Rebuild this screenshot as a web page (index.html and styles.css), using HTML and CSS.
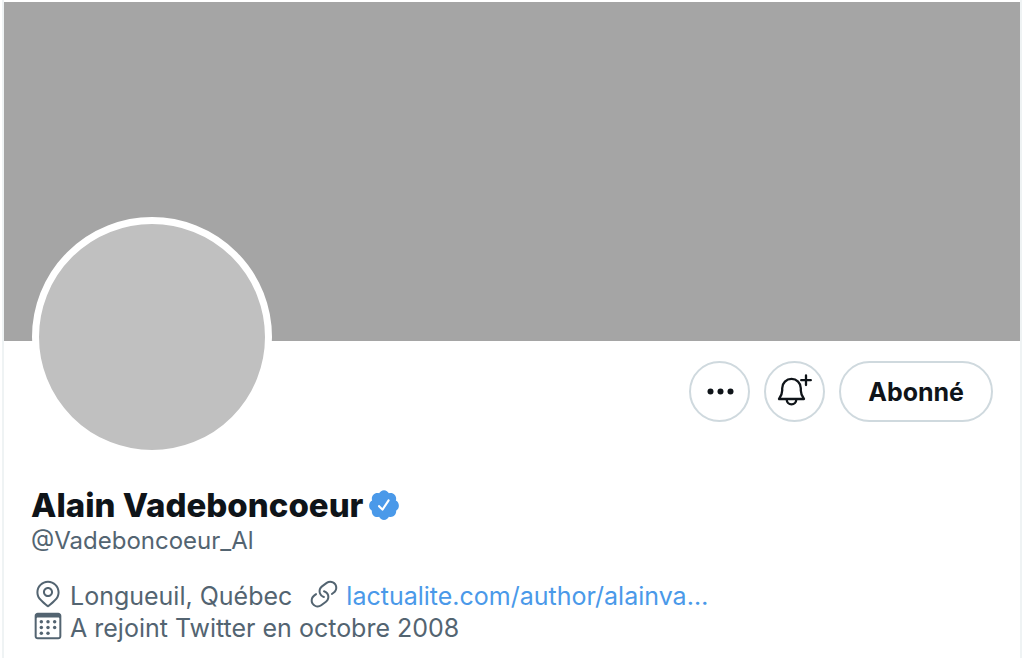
FILE: index.html
```html
<!DOCTYPE html>
<html lang="fr">
<head>
    <meta charset="UTF-8">
    <meta name="viewport" content="width=device-width, initial-scale=1.0">
    <title>Alain Vadeboncoeur</title>
    <link rel="stylesheet" href="styles.css">
</head>
<body>

<main class="profile">
    <div class="cover"></div>

    <div class="top-row">
        <div class="avatar"></div>
        <div class="actions">
            <button class="btn btn-round" type="button" aria-label="Plus">
                <svg class="btn-icon" viewBox="0 0 36 36" fill="currentColor">
                    <circle cx="8.5" cy="17.5" r="3"/>
                    <circle cx="18.5" cy="17.5" r="3"/>
                    <circle cx="28.5" cy="17.5" r="3"/>
                </svg>
            </button>
            <button class="btn btn-round" type="button" aria-label="Notifications">
                <svg class="btn-icon" viewBox="0 0 36 36" fill="none" stroke="currentColor" stroke-width="2.3" stroke-linecap="round" stroke-linejoin="round">
                    <path d="M2 25h25c-2.4-3.2-3.2-5.500-3.200-8.500v-2.300a9.300 9.300 0 0 0-18.600 0v2.300c0 3-.8 5.300-3.200 8.500z"/>
                    <path d="M9.700 25.500a4.800 4.800 0 0 0 9.600 0"/>
                    <path d="M29 1.500v9.500M24.200 6.200h9.600"/>
                </svg>
            </button>
            <button class="btn btn-follow" type="button">Abonné</button>
        </div>
    </div>

    <div class="names">
        <h1 class="name">
            Alain Vadeboncoeur
            <svg class="badge" viewBox="0 0 24 24" fill="currentColor" role="img" aria-label="Compte certifié">
                <path d="M22.5 12.5c0-1.58-.875-2.95-2.148-3.6.154-.435.238-.905.238-1.4 0-2.21-1.71-3.998-3.818-3.998-.47 0-.92.084-1.336.25C14.818 2.415 13.51 1.5 12 1.5s-2.816.917-3.437 2.25c-.415-.165-.866-.25-1.336-.25-2.11 0-3.818 1.79-3.818 4 0 .494.083.964.237 1.4-1.272.65-2.147 2.018-2.147 3.6 0 1.495.782 2.798 1.942 3.486-.02.17-.032.34-.032.514 0 2.21 1.708 4 3.818 4 .47 0 .92-.086 1.335-.25.62 1.334 1.926 2.25 3.437 2.25 1.512 0 2.818-.916 3.437-2.25.415.163.865.248 1.336.248 2.11 0 3.818-1.79 3.818-4 0-.174-.012-.344-.033-.513 1.158-.687 1.943-1.99 1.943-3.484zm-6.616-3.334l-4.334 6.5c-.145.217-.382.334-.625.334-.143 0-.288-.04-.416-.126l-.115-.094-2.415-2.415c-.293-.293-.293-.768 0-1.06s.768-.294 1.06 0l1.77 1.767 3.825-5.74c.23-.345.696-.436 1.04-.207.346.23.44.696.21 1.04z"/>
            </svg>
        </h1>
        <div class="handle">@Vadeboncoeur_Al</div>
    </div>

    <div class="details">
        <span class="detail">
            <svg class="detail-icon" viewBox="0 0 24 24" fill="currentColor">
                <path d="M12 14.315c-2.088 0-3.787-1.698-3.787-3.786S9.913 6.74 12 6.74s3.787 1.7 3.787 3.787-1.7 3.785-3.787 3.785zm0-6.073c-1.26 0-2.287 1.026-2.287 2.287S10.74 12.814 12 12.814s2.287-1.025 2.287-2.286S13.26 8.24 12 8.24z"/>
                <path d="M20.692 10.69C20.692 5.9 16.792 2 12 2s-8.692 3.9-8.692 8.69c0 1.902.603 3.708 1.743 5.223l.003-.002.007.015c1.628 2.07 6.278 5.757 6.475 5.912.138.11.302.163.465.163.163 0 .327-.053.465-.162.197-.155 4.847-3.84 6.475-5.912l.007-.014.002.002c1.14-1.516 1.742-3.32 1.742-5.223zM12 20.29c-1.224-.99-4.52-3.715-5.756-5.285-.94-1.25-1.436-2.742-1.436-4.312C4.808 6.727 8.035 3.5 12 3.5s7.192 3.226 7.192 7.19c0 1.57-.497 3.062-1.436 4.313-1.236 1.57-4.532 4.294-5.756 5.285z"/>
            </svg>
            Longueuil, Québec
        </span>
        <span class="detail">
            <svg class="detail-icon" viewBox="0 0 24 24" fill="currentColor">
                <path d="M11.96 14.945c-.067 0-.136-.01-.203-.027-1.13-.318-2.097-.986-2.795-1.932-.832-1.125-1.176-2.508-.968-3.893s.942-2.605 2.068-3.438l3.53-2.608c2.322-1.716 5.61-1.224 7.33 1.1.83 1.127 1.175 2.51.967 3.895s-.943 2.605-2.07 3.438l-1.48 1.094c-.333.246-.804.175-1.05-.158-.246-.334-.176-.804.158-1.05l1.48-1.095c.803-.592 1.327-1.463 1.476-2.45.148-.988-.098-1.975-.69-2.778-1.225-1.656-3.572-2.01-5.23-.784l-3.53 2.608c-.802.593-1.326 1.464-1.475 2.45-.15.99.097 1.975.69 2.778.498.675 1.187 1.15 1.992 1.377.4.114.633.528.52.928-.092.33-.394.547-.722.547z"/>
                <path d="M7.27 22.054c-1.61 0-3.197-.735-4.225-2.125-.832-1.127-1.176-2.51-.968-3.894s.943-2.605 2.07-3.438l1.478-1.094c.334-.245.805-.175 1.05.158s.177.804-.157 1.05l-1.48 1.095c-.803.593-1.326 1.464-1.475 2.45-.148.99.097 1.975.69 2.778 1.225 1.657 3.57 2.01 5.23.785l3.528-2.608c1.658-1.225 2.01-3.57.785-5.23-.498-.674-1.187-1.15-1.992-1.376-.4-.113-.633-.527-.52-.927.112-.4.528-.63.926-.522 1.13.318 2.096.986 2.794 1.932 1.717 2.324 1.224 5.612-1.1 7.33l-3.53 2.608c-.933.693-2.023 1.026-3.105 1.026z"/>
            </svg>
            <a href="#">lactualite.com/author/alainva…</a>
        </span>
        <span class="detail detail-joined">
            <svg class="detail-icon" viewBox="0 0 24 24" fill="currentColor">
                <path d="M19.708 2H4.292C3.028 2 2 3.028 2 4.292v15.416C2 20.972 3.028 22 4.292 22h15.416C20.972 22 22 20.972 22 19.708V4.292C22 3.028 20.972 2 19.708 2zm.792 17.708c0 .437-.355.792-.792.792H4.292c-.437 0-.792-.355-.792-.792V6.418c0-.437.354-.79.79-.792h15.42c.436 0 .79.355.79.79V19.71z"/>
                <circle cx="7" cy="8.75" r="1.3"/>
                <circle cx="12" cy="8.75" r="1.3"/>
                <circle cx="17" cy="8.75" r="1.3"/>
                <circle cx="7" cy="13.15" r="1.3"/>
                <circle cx="12" cy="13.15" r="1.3"/>
                <circle cx="17" cy="13.15" r="1.3"/>
                <circle cx="7" cy="17.5" r="1.3"/>
                <circle cx="12" cy="17.5" r="1.3"/>
            </svg>
            A rejoint Twitter en octobre 2008
        </span>
    </div>
</main>

</body>
</html>
```
FILE: styles.css
```css
body {
    margin: 0;
    background: #fff;
    color: #0f1419;
    font-family: Inter, "Liberation Sans", sans-serif;
    font-size: 25px;
    line-height: 32px;
}
.profile {
    box-sizing: border-box;
    min-height: 100vh;
    margin: 0 4px 0 2px;
    padding-top: 2px;
    border-left: 2px solid #eff3f4;
    border-right: 2px solid #eff3f4;
}
.cover {
    height: 339px;
    background: #a5a5a5;
}
.top-row {
    display: flex;
    justify-content: space-between;
    align-items: flex-start;
    padding: 0 27px 0 28px;
}
.avatar {
    width: 226px;
    height: 226px;
    margin-top: -124px;
    border: 7px solid #fff;
    border-radius: 50%;
    background: #c0c0c0;
}
.actions {
    display: flex;
    gap: 14px;
    padding-top: 20px;
}
.btn {
    display: flex;
    align-items: center;
    justify-content: center;
    box-sizing: border-box;
    height: 61px;
    padding: 0 27px;
    border: 2px solid #cfd9de;
    border-radius: 31px;
    background: #fff;
    color: #0f1419;
    font-family: inherit;
    font-size: 25px;
    font-weight: 700;
    cursor: pointer;
}
.btn:hover {
    background: #e7e7e8;
}
.btn-round {
    width: 61px;
    padding: 0;
}
.btn-icon {
    width: 36px;
    height: 36px;
}
.names {
    padding: 28px 27px 0;
}
.name {
    display: flex;
    align-items: center;
    gap: 4px;
    margin: 0;
    font-size: 33px;
    font-weight: 800;
    line-height: 40px;
}
.badge {
    width: 34px;
    height: 34px;
    color: #4a99e9;
}
.handle {
    color: #536471;
    font-size: 24px;
}
.details {
    display: flex;
    flex-wrap: wrap;
    column-gap: 16px;
    padding: 21px 28px 0;
    color: #536471;
    line-height: 36px;
}
.detail {
    display: flex;
    align-items: flex-start;
    gap: 6px;
    height: 32px;
}
.detail-joined {
    flex-basis: 100%;
}
.detail-icon {
    width: 32px;
    height: 32px;
}
.detail a {
    color: #4a99e9;
    text-decoration: none;
}
.detail a:hover {
    text-decoration: underline;
}
```
